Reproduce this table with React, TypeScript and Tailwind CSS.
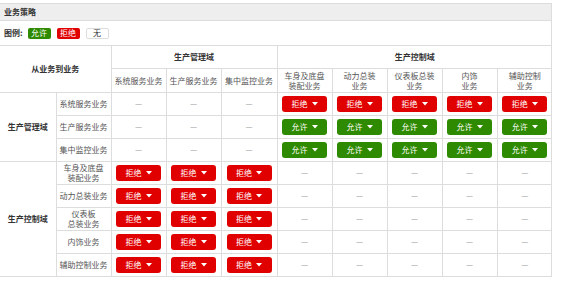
import React from 'react'

type Cell = 'allow' | 'deny' | 'none'

const cols = [
  ['系统服务业务'],
  ['生产服务业务'],
  ['集中监控业务'],
  ['车身及底盘', '装配业务'],
  ['动力总装', '业务'],
  ['仪表板总装', '业务'],
  ['内饰', '业务'],
  ['辅助控制', '业务'],
]

const groups: { domain: string; rows: { name: string[]; cells: Cell[] }[] }[] = [
  {
    domain: '生产管理域',
    rows: [
      { name: ['系统服务业务'], cells: ['none', 'none', 'none', 'deny', 'deny', 'deny', 'deny', 'deny'] },
      { name: ['生产服务业务'], cells: ['none', 'none', 'none', 'allow', 'allow', 'allow', 'allow', 'allow'] },
      { name: ['集中监控业务'], cells: ['none', 'none', 'none', 'allow', 'allow', 'allow', 'allow', 'allow'] },
    ],
  },
  {
    domain: '生产控制域',
    rows: [
      { name: ['车身及底盘', '装配业务'], cells: ['deny', 'deny', 'deny', 'none', 'none', 'none', 'none', 'none'] },
      { name: ['动力总装业务'], cells: ['deny', 'deny', 'deny', 'none', 'none', 'none', 'none', 'none'] },
      { name: ['仪表板', '总装业务'], cells: ['deny', 'deny', 'deny', 'none', 'none', 'none', 'none', 'none'] },
      { name: ['内饰业务'], cells: ['deny', 'deny', 'deny', 'none', 'none', 'none', 'none', 'none'] },
      { name: ['辅助控制业务'], cells: ['deny', 'deny', 'deny', 'none', 'none', 'none', 'none', 'none'] },
    ],
  },
]

function Lines({ parts }: { parts: string[] }) {
  return (
    <>
      {parts.map((p, i) => (
        <div key={i}>{p}</div>
      ))}
    </>
  )
}

function PolicyButton({ kind }: { kind: Cell }) {
  if (kind === 'none') {
    return <span className="text-[#999]">—</span>
  }
  const allow = kind === 'allow'
  return (
    <button
      className={`mx-auto flex h-[16px] w-[45px] items-center justify-center gap-[4px] rounded-[3px] text-[8px] text-white ${
        allow ? 'bg-[#2e8a00]' : 'bg-[#e00000]'
      }`}
    >
      <span>{allow ? '允许' : '拒绝'}</span>
      <svg width="6" height="4" viewBox="0 0 6 4">
        <polygon points="0,0 6,0 3,3.5" fill="white" />
      </svg>
    </button>
  )
}

export default function App() {
  return (
    <div
      className="w-[565px] h-[290px] bg-white pt-[3px] text-[8px] leading-[10px] text-[#333]"
      style={{ fontFamily: '"Noto Sans CJK SC", "Noto Sans", sans-serif' }}
    >
      <div className="w-[552px] border-t border-r border-[#ddd]">
        {/* Panel heading */}
        <div className="flex h-[17px] items-center border-b border-[#ddd] bg-[#eee] pl-[4px] font-bold">
          业务策略
        </div>

        {/* Legend */}
        <div className="flex h-[24px] items-center pl-[4px]">
          <span className="font-bold">图例:</span>
          <span className="ml-[5px] flex h-[11px] w-[23px] items-center justify-center rounded-[2px] bg-[#2e8a00] text-white">
            允许
          </span>
          <span className="ml-[6px] flex h-[11px] w-[23px] items-center justify-center rounded-[2px] bg-[#e00000] text-white">
            拒绝
          </span>
          <span className="ml-[6px] flex h-[11px] w-[23px] items-center justify-center rounded-[2px] border border-[#ddd] text-[#333]">
            无
          </span>
        </div>

        {/* Policy matrix */}
        <table className="w-[552px] table-fixed border-collapse text-center">
          <colgroup>
            <col className="w-[56px]" />
            <col className="w-[55px]" />
            <col className="w-[55px]" />
            <col className="w-[55px]" />
            <col className="w-[56px]" />
            <col className="w-[55px]" />
            <col className="w-[55px]" />
            <col className="w-[55px]" />
            <col className="w-[55px]" />
            <col className="w-[55px]" />
          </colgroup>
          <thead>
            <tr className="h-[23px]">
              <th colSpan={2} rowSpan={2} className="border-t border-r border-b border-[#ddd] font-bold">
                从业务到业务
              </th>
              <th colSpan={3} className="border border-[#ddd] font-bold">
                生产管理域
              </th>
              <th colSpan={5} className="border-t border-b border-l border-[#ddd] font-bold">
                生产控制域
              </th>
            </tr>
            <tr className="h-[24px]">
              {cols.map((c, i) => (
                <th
                  key={i}
                  className={`border-b border-[#ddd] font-normal text-[#555] ${i < cols.length - 1 ? 'border-r' : ''}`}
                >
                  <Lines parts={c} />
                </th>
              ))}
            </tr>
          </thead>
          <tbody>
            {groups.map(g =>
              g.rows.map((r, ri) => (
                <tr key={g.domain + ri} className="h-[23px]">
                  {ri === 0 && (
                    <td rowSpan={g.rows.length} className="border-r border-b border-[#ddd] font-bold">
                      {g.domain}
                    </td>
                  )}
                  <td className="border-r border-b border-[#ddd] text-[#555]">
                    <Lines parts={r.name} />
                  </td>
                  {r.cells.map((c, ci) => (
                    <td
                      key={ci}
                      className={`border-b border-[#ddd] ${ci < r.cells.length - 1 ? 'border-r' : ''}`}
                    >
                      <PolicyButton kind={c} />
                    </td>
                  ))}
                </tr>
              ))
            )}
          </tbody>
        </table>
      </div>
    </div>
  )
}
